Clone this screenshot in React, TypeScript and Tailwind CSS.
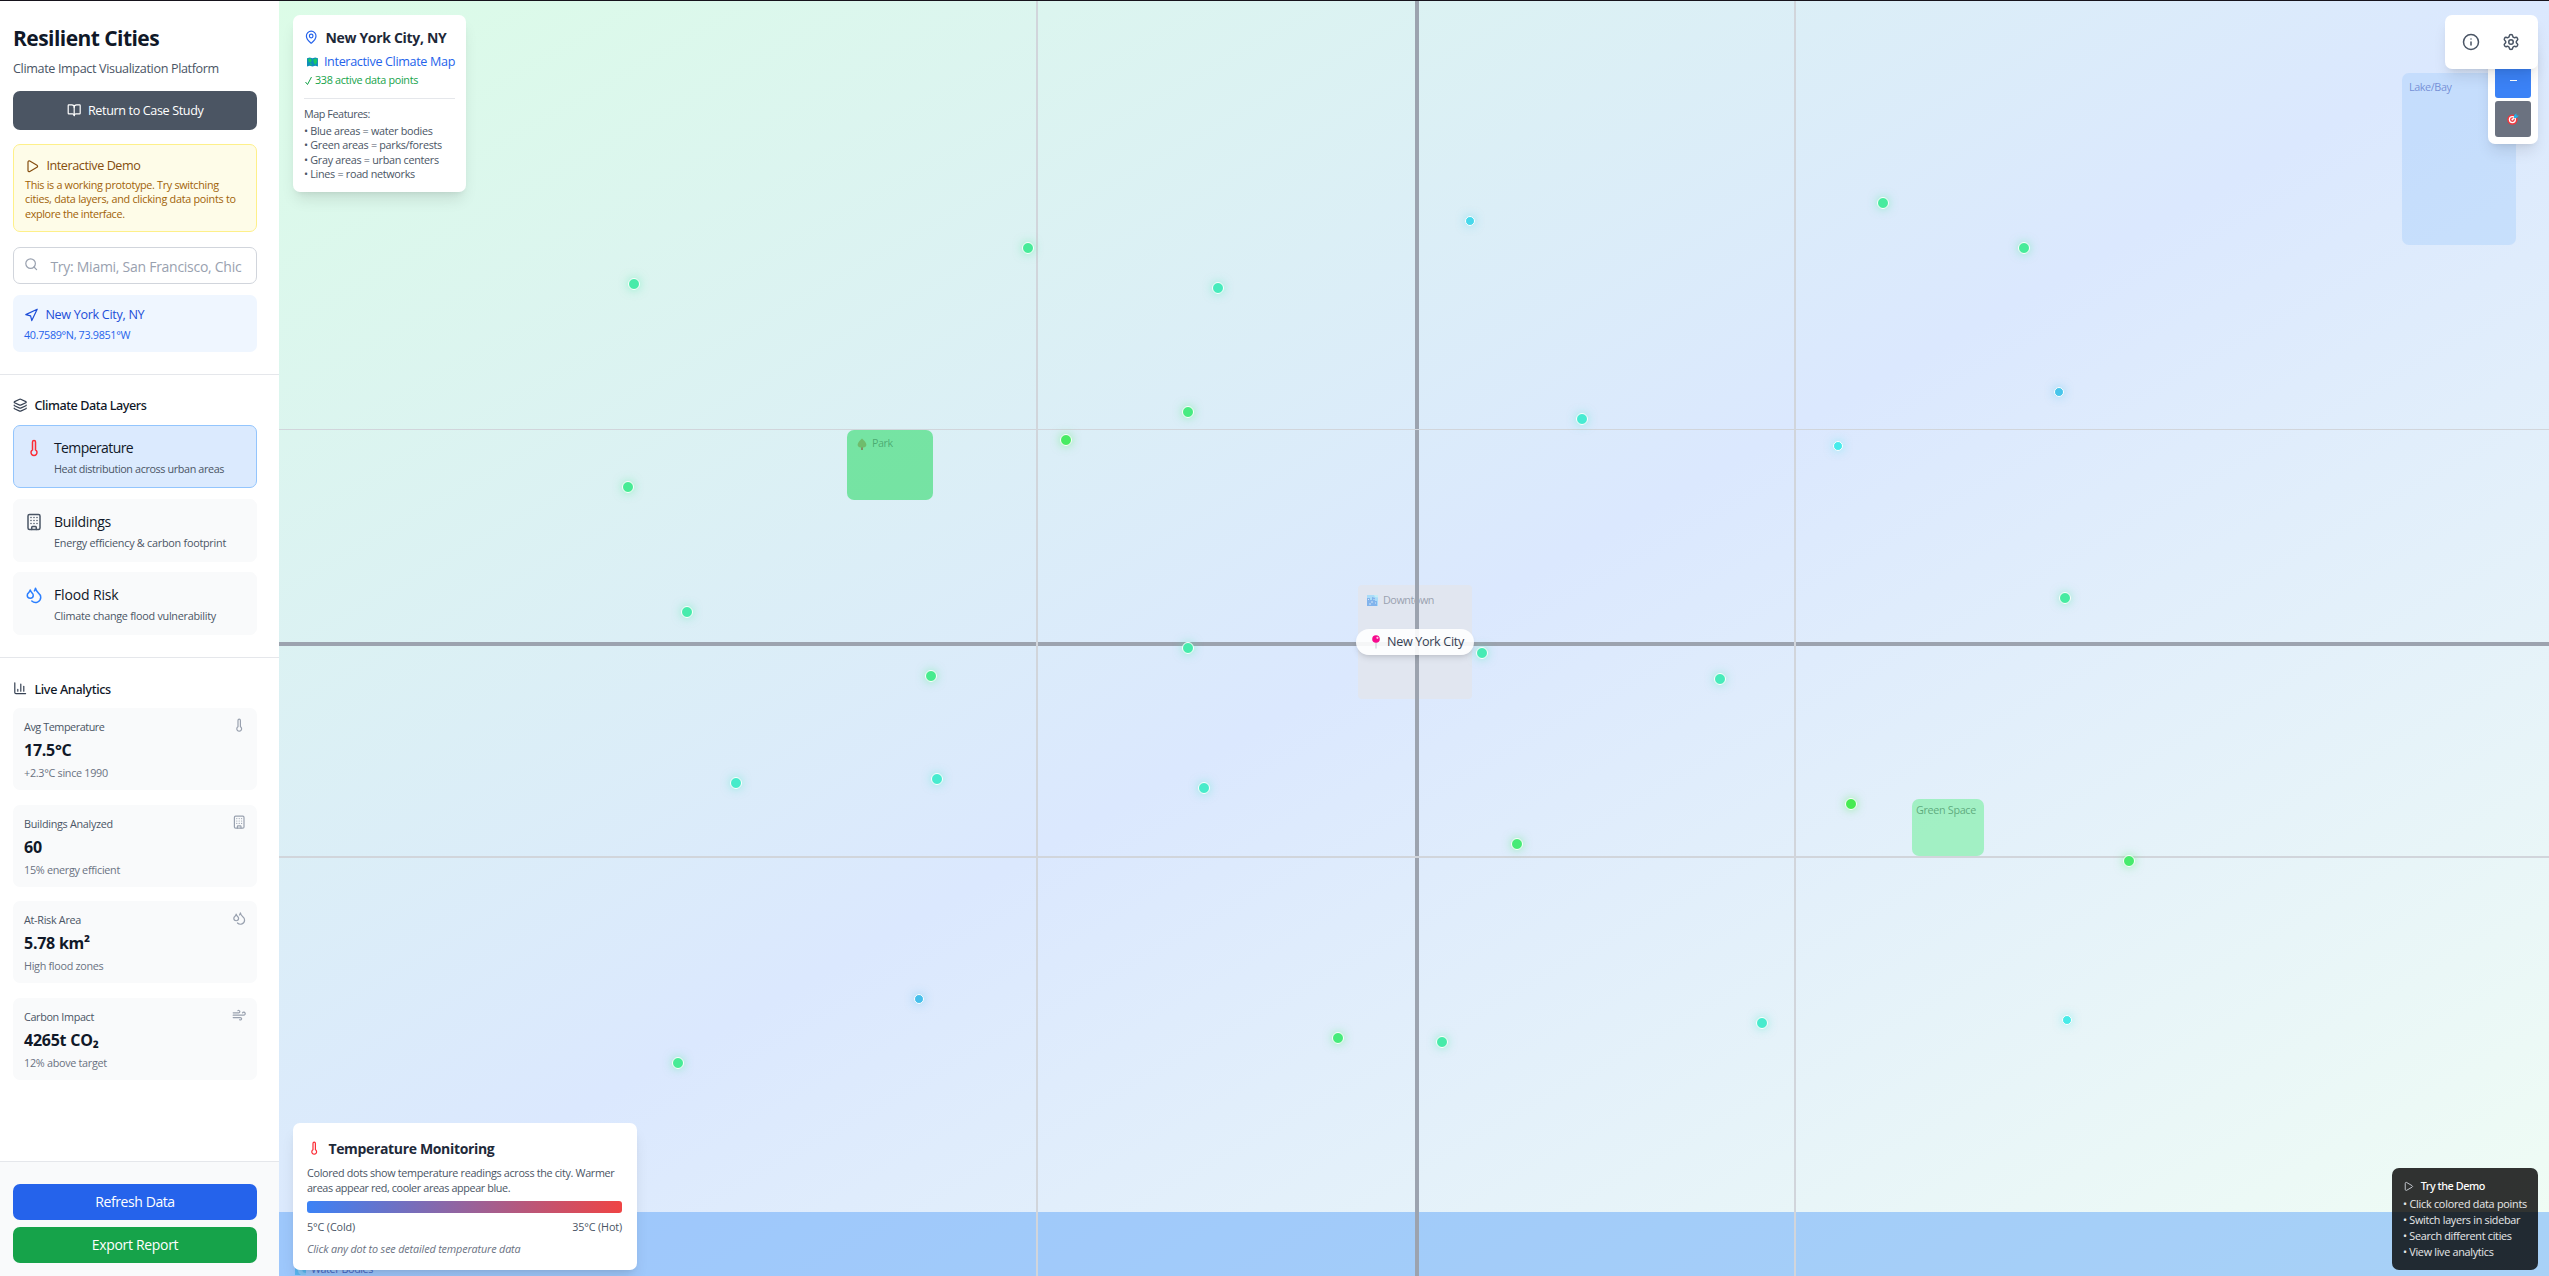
import React from 'react';
import { BookOpen, Play, Search, Navigation, Layers, Thermometer, Building, Droplets, BarChart3, Wind, MapPin, Info, Settings } from 'lucide-react';

const layers = [
  { icon: Thermometer, color: 'text-red-500', name: 'Temperature', nameCls: 'tracking-[-0.6px]', text: 'Heat distribution across urban areas', textCls: 'tracking-[-0.38px]', box: 'mt-[11px] border border-[#93c5fd] bg-[#dbeafe]' },
  { icon: Building, color: 'text-gray-600', name: 'Buildings', nameCls: 'tracking-[-0.3px]', text: 'Energy efficiency & carbon footprint', textCls: 'tracking-[-0.24px]', box: 'mt-[11px] border border-gray-50 bg-gray-50' },
  { icon: Droplets, color: 'text-blue-500', name: 'Flood Risk', nameCls: 'tracking-[-0.15px]', text: 'Climate change flood vulnerability', textCls: 'tracking-[-0.26px]', box: 'mt-[10px] border border-gray-50 bg-gray-50' },
];

const stats = [
  { icon: Thermometer, label: 'Avg Temperature', value: '17.5°C', note: '+2.3°C since 1990', cls: 'tracking-[-0.43px]' },
  { icon: Building, label: 'Buildings Analyzed', value: '60', note: '15% energy efficient', cls: 'tracking-[-0.29px]' },
  { icon: Droplets, label: 'At-Risk Area', value: '5.78 km²', note: 'High flood zones', cls: 'tracking-[-0.29px]' },
  { icon: Wind, label: 'Carbon Impact', value: '4265t CO₂', note: '12% above target', cls: 'tracking-[-0.34px]' },
];

// x, y: centre of the marker; h: hue of the reading; s: small marker
const points = [
  { x: 634, y: 284, h: 156 }, { x: 1028, y: 248, h: 150 }, { x: 1218, y: 288, h: 163 },
  { x: 1188, y: 412, h: 141 }, { x: 1066, y: 440, h: 130 }, { x: 628, y: 487, h: 148 },
  { x: 687, y: 612, h: 157 }, { x: 1188, y: 648, h: 157 }, { x: 931, y: 676, h: 146 },
  { x: 736, y: 783, h: 168 }, { x: 937, y: 779, h: 170 }, { x: 1204, y: 788, h: 168 },
  { x: 919, y: 999, h: 196, s: true }, { x: 678, y: 1063, h: 149 },
  { x: 1470, y: 221, h: 187, s: true }, { x: 1582, y: 419, h: 171 }, { x: 1482, y: 653, h: 160 },
  { x: 1720, y: 679, h: 162 }, { x: 1517, y: 844, h: 137 }, { x: 1338, y: 1038, h: 139 },
  { x: 1442, y: 1042, h: 156 }, { x: 1762, y: 1023, h: 169 }, { x: 1883, y: 203, h: 152 },
  { x: 2024, y: 248, h: 150 }, { x: 2059, y: 392, h: 194, s: true }, { x: 1838, y: 446, h: 180, s: true },
  { x: 2065, y: 598, h: 153 }, { x: 1851, y: 804, h: 124 }, { x: 2129, y: 861, h: 134 },
  { x: 2067, y: 1020, h: 179, s: true },
];

const MAP_LEFT = 279;
const MAP_TOP = 1;

const MapEmoji = () => (
  <svg width="12" height="12" viewBox="0 0 12 12" className="block">
    <path d="M0 2 3 1 6 2 9 1 12 2V11L9 10 6 11 3 10 0 11Z" fill="#0e8fb8" />
    <path d="M1.2 2.6 4 2 5.2 4.5 3.8 6.6 2 6ZM7 3 10.800 2.2 11 6 9.6 9 8 7.800 7.2 5.5ZM3 7.6 5.4 8 4.4 10Z" fill="#17c964" />
  </svg>
);
const TreeEmoji = () => (
  <svg width="10" height="12" viewBox="0 0 10 12" className="block">
    <path d="M4.3 8h1.4v4H4.3z" fill="#8a6a4a" />
    <path d="M5 .5C7 2.2 9.4 4.7 9.4 7 9.4 8.6 7.4 9.6 5 9.6S.6 8.6.6 7C.6 4.7 3 2.2 5 .5Z" fill="#6fbc6c" />
  </svg>
);
const CityEmoji = () => (
  <svg width="11" height="11" viewBox="0 0 11 11" className="block">
    <path d="M0 0h11v11H0z" fill="#a9dcf9" />
    <path d="M0 3h3v2h2V2l3 1v3h2v5H0z" fill="#82b4ec" />
    <path d="M1 4.5h1M4 7h2M6.5 4.5h1M2 9h2M8 8h1" stroke="#d5e6f7" />
    <path d="M7 0h4v2.5L8 2z" fill="#c4eef6" />
  </svg>
);
const PinEmoji = () => (
  <svg width="10" height="14" viewBox="0 0 10 14" className="block">
    <path d="M4.5 7h1v6.5h-1z" fill="#c3c9d1" />
    <circle cx="5" cy="4" r="3.800" fill="#f70a8d" />
    <circle cx="6.4" cy="2.8" r="1.1" fill="#ffc4e2" />
  </svg>
);
const TargetEmoji = () => (
  <svg width="12" height="12" viewBox="0 0 12 12" className="block">
    <circle cx="5.4" cy="6.6" r="5.2" fill="#f0383f" />
    <circle cx="5.4" cy="6.6" r="3.6" fill="#fff" />
    <circle cx="5.4" cy="6.6" r="2.4" fill="#f0383f" />
    <circle cx="5.4" cy="6.6" r="1" fill="#fff" />
    <path d="M5.4 6.6 8.5 3.5" stroke="#fff" strokeWidth="1.2" />
    <path d="M7 5V2.4L9.4.2v2.2h2.400L9.6 5Z" fill="#22aee8" />
  </svg>
);
const WaveEmoji = () => (
  <svg width="11" height="11" viewBox="0 0 11 11" className="block">
    <path d="M0 0h11v11H0z" fill="#3fb3ee" />
    <path d="M3 6c0-4 5-5 8-2-3-.5-4 1-3.5 3 .3 1.200 1.500 2 3.500 2v2H6C4 10 3 8 3 6Z" fill="#7cc9f7" />
  </svg>
);

export default function App() {
  return (
    <div className="flex h-[1276px] w-[2549px] overflow-hidden whitespace-nowrap border-t border-[#16131c] bg-white font-['Open_Sans','Noto_Sans',sans-serif] text-gray-900">
      <aside className="flex w-[279px] shrink-0 flex-col bg-white">
        <section className="h-[374px] border-b border-gray-200 pl-[13px] pr-[22px] pt-[20px]">
          <h1 className="h-[34px] text-[21px] font-bold leading-[34px] tracking-[-0.55px]">Resilient Cities</h1>
          <p className="mt-[4px] h-[20px] text-[12.6px] leading-[20px] tracking-[-0.36px] text-gray-600">Climate Impact Visualization Platform</p>
          <button className="mt-[12px] flex h-[39px] w-[244px] items-center justify-center rounded-[7px] bg-[#4b5563] text-white">
            <BookOpen size={14.4} className="mb-[1px] mr-[7px]" />
            <span className="mt-[2px] text-[12.6px] tracking-[-0.37px]">Return to Case Study</span>
          </button>
          <div className="mt-[14px] h-[88px] w-[244px] rounded-[7px] border border-[#fef08a] bg-[#fefce8] pl-[11px] pt-[11px]">
            <div className="flex h-[20px] items-center text-[#854d0e]">
              <Play size={14.4} className="mr-[7px]" />
              <span className="text-[12.6px] tracking-[-0.42px]">Interactive Demo</span>
            </div>
            <div className="mt-[2px] text-[10.8px] leading-[14.4px] text-[#a16207]">
              <p className="tracking-[-0.31px]">This is a working prototype. Try switching</p>
              <p className="tracking-[-0.26px]">cities, data layers, and clicking data points to</p>
              <p className="tracking-[-0.36px]">explore the interface.</p>
            </div>
          </div>
          <div className="mt-[15px] flex h-[37px] w-[244px] items-center rounded-[7px] border border-gray-300 pl-[10px] text-gray-400">
            <Search size={14.4} className="mb-[2px]" />
            <span className="ml-[12px] mt-px text-[14px] tracking-[-0.27px]">Try: Miami, San Francisco, Chic</span>
          </div>
          <div className="mt-[11px] h-[57px] w-[244px] rounded-[7px] bg-[#eff6ff] pl-[11px] pt-[11px]">
            <div className="flex h-[18px] items-center text-[#1d4ed8]">
              <Navigation size={14.4} className="mr-[7px]" />
              <span className="mt-px text-[12.6px] tracking-[-0.31px]">New York City, NY</span>
            </div>
            <p className="mt-[3px] text-[10.8px] leading-[16px] tracking-[-0.33px] text-[#2563eb]">40.7589°N, 73.9851°W</p>
          </div>
        </section>

        <section className="h-[283px] border-b border-gray-200 pl-[13px] pt-[23px]">
          <h2 className="flex h-[16px] items-center">
            <Layers size={14.4} className="mb-[1px] mr-[7px] text-gray-700" />
            <span className="mt-[1px] font-['Noto_Sans'] text-[12.6px] font-medium tracking-[-0.43px]">Climate Data Layers</span>
          </h2>
          {layers.map(({ icon: Icon, ...l }) => (
            <div key={l.name} className={`flex h-[63px] w-[244px] rounded-[7px] ${l.box}`}>
              <Icon size={18} className={`ml-[11px] mt-[13px] ${l.color}`} />
              <div className="ml-[11px] pt-[10px]">
                <p className={`h-[23px] text-[14px] leading-[23px] ${l.nameCls}`}>{l.name}</p>
                <p className={`h-[20px] text-[10.8px] leading-[20px] text-gray-600 ${l.textCls}`}>{l.text}</p>
              </div>
            </div>
          ))}
        </section>

        <section className="flex-1 pl-[13px] pt-[23px]">
          <h2 className="mb-[11px] flex h-[16px] items-center">
            <BarChart3 size={14.4} className="mb-[1px] mr-[7px] text-gray-700" />
            <span className="mt-[2px] font-['Noto_Sans'] text-[12.6px] font-medium tracking-[-0.34px]">Live Analytics</span>
          </h2>
          <div className="flex flex-col gap-[14.700px]">
            {stats.map(({ icon: Icon, ...s }) => (
              <div key={s.label} className="flex h-[82px] w-[244px] justify-between rounded-[7px] bg-gray-50 pl-[11px] pr-[11px] pt-[10px]">
                <div>
                  <p className={`h-[17px] text-[10.8px] leading-[17px] text-gray-600 ${s.cls}`}>{s.label}</p>
                  <p className="mt-[2px] h-[26px] text-[16px] font-bold leading-[26px] tracking-[-0.25px]">{s.value}</p>
                  <p className="mt-[1px] h-[17px] text-[10.8px] leading-[17px] tracking-[-0.29px] text-gray-500">{s.note}</p>
                </div>
                <Icon size={14.4} className="text-gray-400" />
              </div>
            ))}
          </div>
        </section>

        <footer className="h-[115px] border-t border-gray-200 bg-gray-50 pl-[13px] pt-[22px] text-center text-[14px] leading-[36px] text-white">
          <button className="block h-[36px] w-[244px] rounded-[7px] bg-[#2563eb] tracking-[-0.41px]">Refresh Data</button>
          <button className="mt-[7px] block h-[36px] w-[244px] rounded-[7px] bg-[#16a34a] tracking-[-0.32px]">Export Report</button>
        </footer>
      </aside>

      <main className="relative flex-1 overflow-hidden bg-[linear-gradient(to_bottom_right,#dcfce7,#dbe8fe,#f0fdf4)]">
        <div className="absolute inset-x-0 top-[1211px] h-[64px] bg-[#60a5fa]/50">
          <div className="absolute left-[16px] top-[50px] flex h-[14px] items-center opacity-70">
            <WaveEmoji />
            <span className="ml-[5px] text-[10.8px] leading-[14px] tracking-[-0.43px] text-[#1e40af]">Water Bodies</span>
          </div>
        </div>
        <div className="absolute left-[2123px] top-[72px] h-[172px] w-[114px] rounded-[7px] bg-[#93c5fd]/30 pl-[7px] pt-[6px]">
          <p className="text-[10.8px] leading-[16px] tracking-[-0.4px] text-[#1e40af]/50">Lake/Bay</p>
        </div>
        <div className="absolute left-[568px] top-[429px] flex h-[70px] w-[86px] items-start rounded-[7px] bg-[#4ade80]/70 pl-[10px] pt-[5px]">
          <div className="mt-[3px]"><TreeEmoji /></div>
          <span className="ml-[5px] text-[10.8px] leading-[16px] tracking-[-0.5px] text-[#166534]/45">Park</span>
        </div>
        <div className="absolute left-[1633px] top-[798px] h-[57px] w-[72px] rounded-[7px] bg-[#86efac]/70 pl-[4px] pt-[3px]">
          <p className="text-[10.8px] leading-[16px] tracking-[-0.33px] text-[#166534]/50">Green Space</p>
        </div>
        <div className="absolute left-[1079px] top-[584px] flex h-[114px] w-[114px] items-start rounded-[4px] bg-[#e1e6f0] pl-[9px] pt-[7px]">
          <div className="mt-[3px]"><CityEmoji /></div>
          <span className="ml-[5px] text-[10.8px] leading-[15px] tracking-[-0.46px] text-gray-400">Downtown</span>
        </div>

        <div className="absolute inset-x-0 top-[641px] h-[4px] bg-[#9ca3af]" />
        <div className="absolute inset-y-0 left-[1136px] w-[4px] bg-[#9ca3af]" />
        <div className="absolute inset-x-0 top-[428px] h-px bg-[#d1d5db]" />
        <div className="absolute inset-x-0 top-[855px] h-[2px] bg-[#d1d5db]" />
        <div className="absolute inset-y-0 left-[757px] w-[2px] bg-[#d1d5db]" />
        <div className="absolute inset-y-0 left-[1515px] w-[2px] bg-[#d1d5db]" />

        {points.map((p) => (
          <span
            key={`${p.x}-${p.y}`}
            className={`absolute -translate-x-1/2 -translate-y-1/2 rounded-full border border-white ${p.s ? 'size-[10px]' : 'size-[12px]'}`}
            style={{ left: p.x - MAP_LEFT, top: p.y - MAP_TOP, backgroundColor: `hsl(${p.h} 80% 60%)`, boxShadow: `0 0 10px hsl(${p.h} 80% 60% / 0.5)` }}
          />
        ))}

        <div className="absolute left-[1077px] top-[628px] flex h-[26px] w-[118px] items-center rounded-full bg-white/90 pl-[15px] shadow-md">
          <PinEmoji />
          <span className="ml-[6px] mt-px text-[12.6px] tracking-[-0.32px] text-gray-700">New York City</span>
        </div>

        <div className="absolute left-[14px] top-[14px] h-[177px] w-[173px] rounded-[7px] bg-white px-[11px] pt-[11px] shadow-lg">
          <div className="flex h-[22px] items-center">
            <MapPin size={14.4} className="mr-[7px] text-[#2563eb]" />
            <span className="text-[14px] font-bold tracking-[-0.31px] text-gray-800">New York City, NY</span>
          </div>
          <div className="mt-[4px] flex h-[20px] items-center pl-[3px]">
            <MapEmoji />
            <span className="ml-[6px] text-[12.6px] tracking-[-0.35px] text-[#2563eb]">Interactive Climate Map</span>
          </div>
          <div className="flex h-[17px] items-center text-[#16a34a]">
            <svg width="9" height="10" viewBox="0 0 9 10" fill="none" stroke="currentColor"><path d="M1.500 6 3.500 8.500 7.500 1" /></svg>
            <span className="ml-[2px] text-[10.8px] tracking-[-0.32px]">338 active data points</span>
          </div>
          <div className="mt-[9px] border-t border-gray-200 pt-[6px] text-[10.8px] leading-[14.4px] text-gray-600">
            <p className="h-[17px] leading-[17px] tracking-[-0.44px]">Map Features:</p>
            <div className="mt-[2px] tracking-[-0.3px]">
              <p>• Blue areas = water bodies</p>
              <p>• Green areas = parks/forests</p>
              <p>• Gray areas = urban centers</p>
              <p>• Lines = road networks</p>
            </div>
          </div>
        </div>

        <div className="absolute left-[2209px] top-[39px] flex h-[104px] w-[50px] flex-col gap-[3px] rounded-[7px] bg-white px-[7px] pt-[22px] shadow-lg">
          <button className="flex h-[36px] w-[36px] items-center justify-center rounded-[3px] bg-[#3b82f6]">
            <span className="h-px w-[7px] bg-white" />
          </button>
          <button className="flex h-[36px] w-[36px] items-center justify-center rounded-[3px] bg-[#6b7280]">
            <TargetEmoji />
          </button>
        </div>
        <div className="absolute left-[2166px] top-[14px] flex h-[54px] w-[93px] items-center gap-[22px] rounded-[7px] bg-white pl-[17px] text-gray-600 shadow-lg">
          <Info size={18} />
          <Settings size={18} />
        </div>

        <div className="absolute left-[14px] top-[1122px] h-[147px] w-[344px] rounded-[7px] bg-white px-[14px] pt-[14px] shadow-lg">
          <div className="flex h-[22px] items-center">
            <Thermometer size={14.4} className="mr-[7px] text-red-500" />
            <span className="text-[14px] font-bold tracking-[-0.34px] text-gray-800">Temperature Monitoring</span>
          </div>
          <div className="mt-[7px] text-[10.8px] leading-[14.6px] text-gray-600">
            <p className="tracking-[-0.33px]">Colored dots show temperature readings across the city. Warmer</p>
            <p className="tracking-[-0.38px]">areas appear red, cooler areas appear blue.</p>
          </div>
          <div className="mt-[6px] h-[12px] w-[315px] rounded-[3px] bg-[linear-gradient(to_right,#3b82f6,#ef4444)]" />
          <div className="mt-[5px] flex h-[18px] w-[315px] justify-between text-[10.8px] leading-[18px] tracking-[-0.14px] text-gray-600">
            <span>5°C (Cold)</span>
            <span>35°C (Hot)</span>
          </div>
          <p className="mt-[4px] text-[10.8px] italic leading-[18px] tracking-[-0.14px] text-gray-500">Click any dot to see detailed temperature data</p>
        </div>

        <div className="absolute left-[2113px] top-[1167px] h-[102px] w-[146px] rounded-[7px] bg-black/80 pl-[11px] pt-[9px] text-[10.8px] text-white">
          <div className="flex h-[18px] items-center">
            <Play size={10.8} className="mr-[7px] text-gray-300" />
            <span className="font-['Noto_Sans'] font-medium tracking-[-0.45px]">Try the Demo</span>
          </div>
          <div className="mt-px leading-[16px] text-white/90">
            <p className="tracking-[-0.23px]">• Click colored data points</p>
            <p className="tracking-[-0.29px]">• Switch layers in sidebar</p>
            <p className="tracking-[-0.29px]">• Search different cities</p>
            <p className="tracking-[-0.29px]">• View live analytics</p>
          </div>
        </div>
      </main>
    </div>
  );
}
